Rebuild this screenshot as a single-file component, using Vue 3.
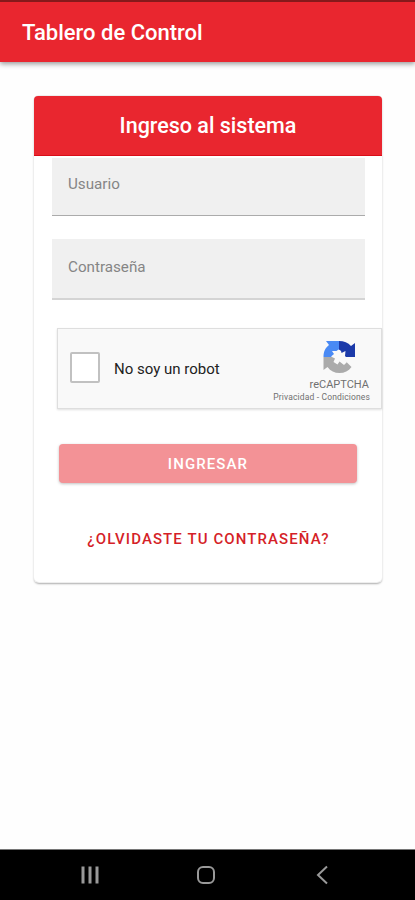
<script setup>
import { ref } from "vue";

const usuario = ref("");
const contrasena = ref("");
const robot = ref(false);
</script>

<template>
  <div class="app">
    <header class="toolbar">
      <h1>Tablero de Control</h1>
    </header>

    <main class="content">
      <form class="card" @submit.prevent>
        <h2 class="card-title">Ingreso al sistema</h2>
        <div class="card-body">
          <input v-model="usuario" class="field user" type="text" placeholder="Usuario" />
          <input v-model="contrasena" class="field pass" type="password" placeholder="Contraseña" />

          <div class="captcha">
            <button
              type="button"
              class="check"
              :class="{ checked: robot }"
              aria-label="No soy un robot"
              @click="robot = !robot"
            ></button>
            <span class="captcha-text">No soy un robot</span>
            <div class="captcha-brand">
              <svg class="captcha-logo" viewBox="0 0 34 34">
                <path
                  fill="#1c3aa9"
                  d="M17 1c5 0 9 1.500 12 5l4-3v14H17z"
                />
                <path
                  fill="#4a8af4"
                  d="M17 1H4l3 4C3 8 1.500 12 1.500 17H17z"
                />
                <path
                  fill="#ababab"
                  d="M1.500 17v13l4-3c3 4 7 6 12 6 5 0 9-2 12-6l-6-6-6-4z"
                />
                <!-- white pinwheel in the middle of the arrows -->
                <path
                  fill="#f9f9f9"
                  d="M16.500 9.500q3 .5 3 3.500l4-2-.5 5 3 3h-3.500l2.500 3-3 3-4.500-3.500-2 3-4-2.500 1.500-3.500-4-2 3-2.500-2-3h4.500z"
                />
              </svg>
              <span class="brand-name">reCAPTCHA</span>
              <span class="brand-links">Privacidad - Condiciones</span>
            </div>
          </div>

          <button class="submit" type="submit" disabled>INGRESAR</button>
          <a class="forgot">¿OLVIDASTE TU CONTRASEÑA?</a>
        </div>
      </form>
    </main>

    <nav class="navbar">
      <svg viewBox="0 0 20 20">
        <path d="M3 1.500v17M10 1.500v17M17 1.500v17" stroke-width="3" />
      </svg>
      <svg viewBox="0 0 20 20">
        <rect x="2" y="2" width="16" height="16" rx="5" stroke-width="2" />
      </svg>
      <svg viewBox="0 0 20 20">
        <path d="M15 1.500L6 10l9 8.500" stroke-width="2" />
      </svg>
    </nav>
  </div>
</template>

<style>
body {
  margin: 0;
  background: #fefefe;
}
</style>

<style scoped>
.app {
  display: flex;
  flex-direction: column;
  height: 900px;
  font-family: Roboto, sans-serif;
  background: #fefefe;
}

.app * {
  box-sizing: border-box;
}

.toolbar {
  display: flex;
  align-items: center;
  height: 62px;
  padding: 0 22px;
  border-top: 2px solid #85191b;
  background: #e9262f;
  color: #fff;
  box-shadow: 0 2px 5px rgba(0, 0, 0, 0.4);
}

h1,
h2 {
  margin: 0;
  font-weight: 500;
}

h1 {
  font-size: 22px;
}

.content {
  flex: 1;
  padding: 34px 33px 0 34px;
}

.card {
  height: 486px;
  border-radius: 5px;
  background: #fff;
  box-shadow: 0 0 0 1px #eee, 0 2px 2px rgba(0, 0, 0, 0.32);
}

.card-title {
  display: flex;
  align-items: center;
  justify-content: center;
  height: 60px;
  border-radius: 4px 4px 0 0;
  border-bottom: 1px solid #d90d18;
  background: #e9262f;
  color: #fff;
  font-size: 21.5px;
}

.card-body {
  display: flex;
  flex-direction: column;
  padding: 2px 0 0 18px;
}

.field {
  width: 313px;
  padding: 0 16px 5px;
  border: 0;
  border-bottom: 1px solid #ababab;
  border-radius: 0;
  outline: 0;
  background: #f0f0f0;
  font-family: inherit;
  font-size: 15.2px;
}

.field::placeholder {
  color: #858585;
  opacity: 1;
}

.user {
  height: 58px;
}

.pass {
  height: 61px;
  margin-top: 23px;
  padding-bottom: 4px;
  border-bottom: 2px solid #d4d4d4;
}

.captcha {
  display: flex;
  align-items: center;
  width: 325px;
  height: 81px;
  margin: 28px 0 0 5px;
  padding: 0 11px 0 12px;
  border: 1px solid #dedede;
  background: #f9f9f9;
  box-shadow: 0 1px 2px rgba(0, 0, 0, 0.12);
}

.check {
  width: 30px;
  height: 31px;
  margin-top: -2px;
  padding: 0;
  border: 2px solid #c1c1c1;
  border-radius: 2px;
  background: #fff;
}

.check.checked {
  background: #4285f4;
}

.captcha-text {
  margin-left: 14px;
  color: #222;
  font-size: 15px;
}

.captcha-brand {
  display: flex;
  flex-direction: column;
  align-items: flex-end;
  margin-left: auto;
  padding-top: 5px;
  color: #707070;
}

.captcha-logo {
  width: 34px;
  height: 34px;
  margin-right: 14px;
}

.brand-name {
  margin: 4px 1px 0 0;
  font-size: 11px;
  line-height: 14px;
}

.brand-links {
  font-size: 8.500px;
  line-height: 11px;
  letter-spacing: 0.15px;
}

.submit {
  width: 298px;
  height: 39px;
  margin: 35px 0 0 7px;
  padding: 0;
  border: 0;
  border-radius: 4px;
  background: #f39296;
  color: #fff;
  box-shadow: 0 1px 3px rgba(0, 0, 0, 0.25);
  font-family: inherit;
  font-size: 15px;
  font-weight: 500;
  letter-spacing: 1.1px;
}

.forgot {
  width: 313px;
  margin-top: 46px;
  color: #d51f28;
  font-size: 15px;
  font-weight: 500;
  line-height: 20px;
  letter-spacing: 1.1px;
  text-align: center;
}

.navbar {
  display: flex;
  justify-content: center;
  gap: 96px;
  height: 51px;
  padding: 15px 4px 0 0;
  border-top: 1px solid #777;
  background: #000;
}

.navbar svg {
  width: 20px;
  height: 20px;
  fill: none;
  stroke: #999;
}
</style>
